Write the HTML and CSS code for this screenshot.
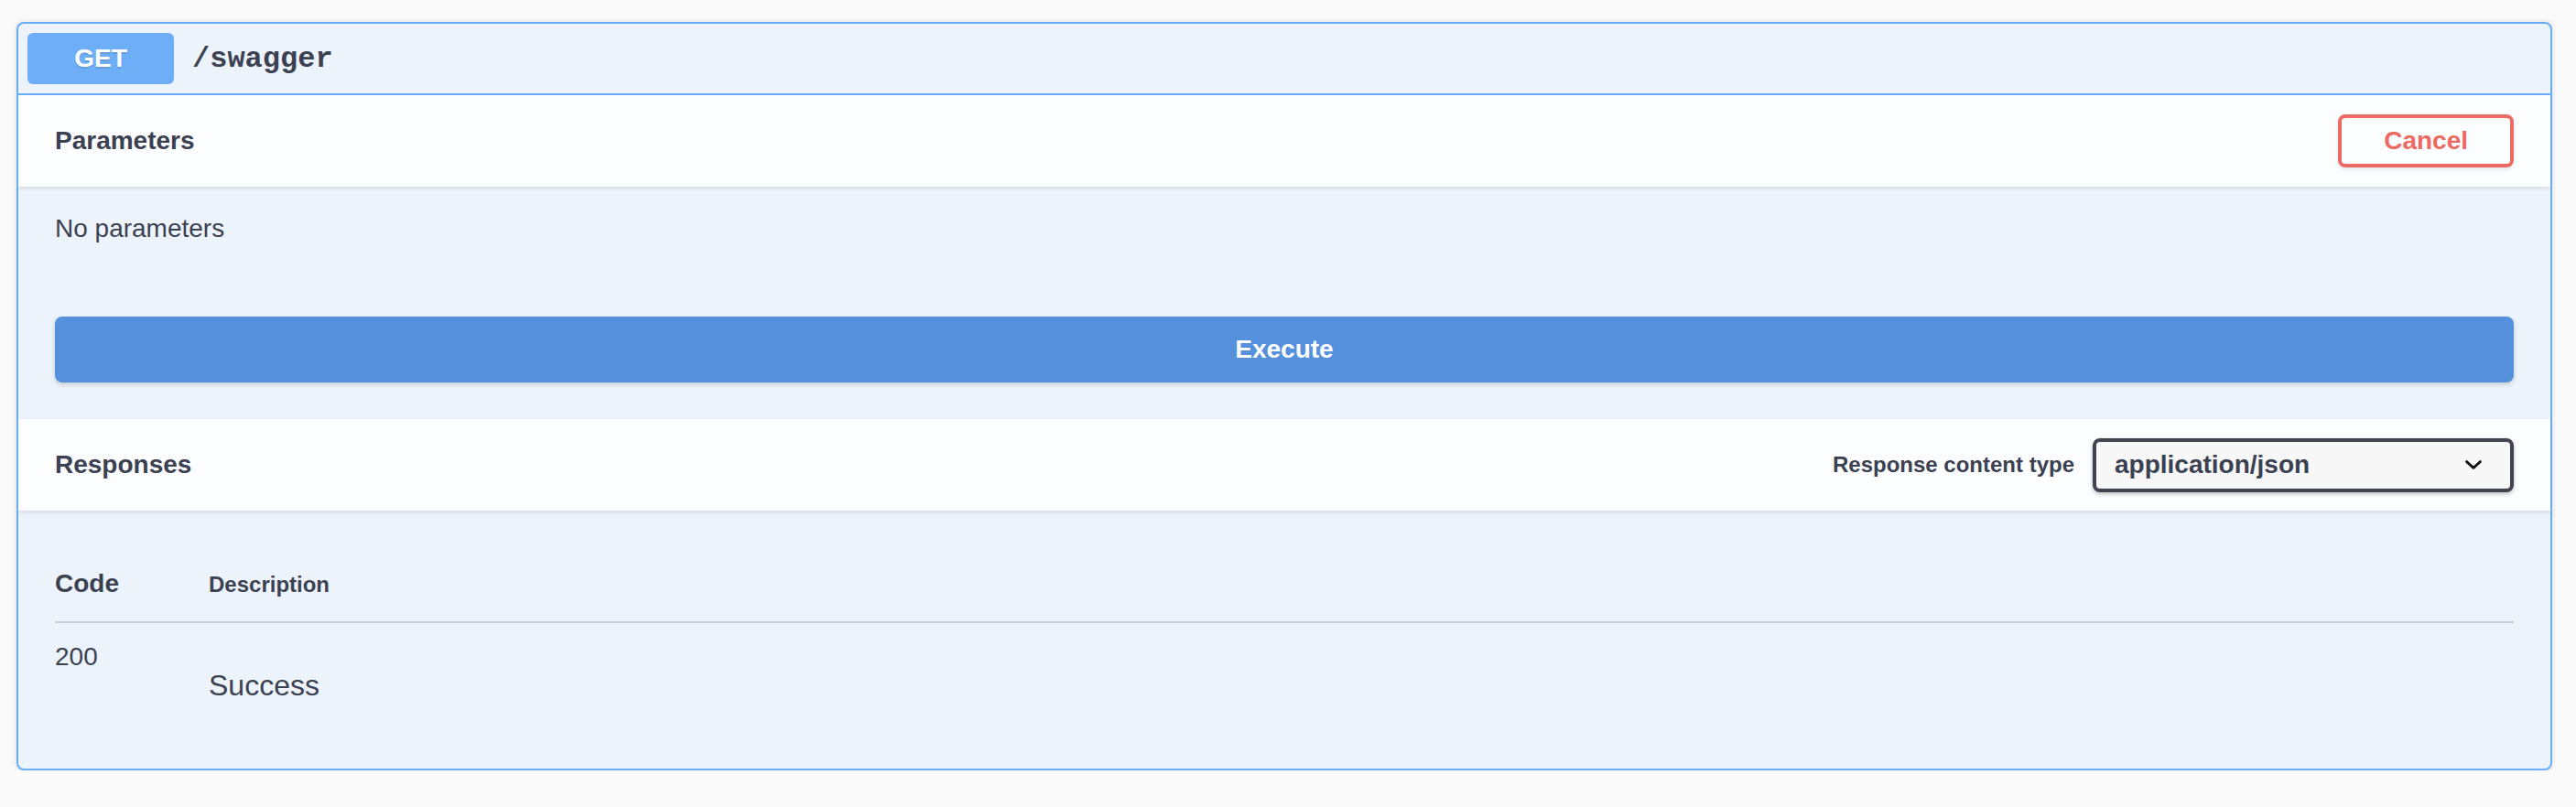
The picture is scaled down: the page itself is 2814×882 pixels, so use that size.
FILE: index.html
```html
<!DOCTYPE html>
<html lang="en">
<head>
<meta charset="utf-8">
<title>GET /swagger</title>
<link rel="stylesheet" href="styles.css">
</head>
<body>
<div class="opblock">
  <div class="summary">
    <span class="method">GET</span>
    <span class="path">/swagger</span>
  </div>
  <div class="section-header">
    <h4 class="section-title">Parameters</h4>
    <button class="btn-cancel" type="button">Cancel</button>
  </div>
  <div class="params-body">
    <p class="no-params">No parameters</p>
  </div>
  <div class="execute-wrapper">
    <button class="btn-execute" type="button">Execute</button>
  </div>
  <div class="section-header">
    <h4 class="section-title">Responses</h4>
    <div class="content-type">
      <span class="content-type-label">Response content type</span>
      <div class="select">
        <span class="select-value">application/json</span>
        <svg class="chevron" width="18" height="10" viewBox="0 0 18 10" aria-hidden="true"><path d="M1.6 1.6 L9 8.4 L16.4 1.6" fill="none" stroke="#111" stroke-width="2.8" stroke-linecap="round" stroke-linejoin="round"/></svg>
      </div>
    </div>
  </div>
  <div class="responses-inner">
    <table class="responses-table">
      <thead>
        <tr>
          <td class="col-status head-code">Code</td>
          <td class="head-desc">Description</td>
        </tr>
      </thead>
      <tbody>
        <tr>
          <td class="col-status status-code">200</td>
          <td class="desc-cell"><p class="desc-text">Success</p></td>
        </tr>
      </tbody>
    </table>
  </div>
</div>
</body>
</html>
```

FILE: styles.css
```css
html, body {
  margin: 0;
  background: #fafafa;
}
body {
  padding: 24px 26px 0 18px;
  font-family: "Liberation Sans", Arial, sans-serif;
  color: #3b4151;
}
.opblock {
  border: 2px solid #6aadf7;
  border-radius: 8px;
  background: #ecf3fb;
  box-shadow: 0 0 6px rgba(0, 0, 0, 0.12);
  overflow: hidden;
}
.summary {
  display: flex;
  align-items: center;
  padding: 10px;
  border-bottom: 2px solid #6aadf7;
}
.method {
  width: 160px;
  padding: 12px 0;
  line-height: 32px;
  font-size: 28px;
  font-weight: 700;
  text-align: center;
  color: #fff;
  background: #6eaef7;
  border-radius: 6px;
  text-shadow: 0 2px 0 rgba(0, 0, 0, 0.1);
}
.path {
  padding-left: 20px;
  font-family: "Liberation Mono", "Courier New", monospace;
  font-weight: 700;
  font-size: 32px;
  color: #3b4151;
}
.section-header {
  display: flex;
  align-items: center;
  justify-content: space-between;
  height: 100px;
  box-sizing: border-box;
  padding: 0 40px;
  background: #fcfdfe;
  box-shadow: 0 2px 4px rgba(0, 0, 0, 0.1);
  position: relative;
}
.section-title {
  margin: 0;
  font-size: 28px;
  line-height: 32px;
  font-weight: 700;
  color: #3b4151;
}
.btn-cancel {
  padding: 10px 46px;
  border: 4px solid #ec6a64;
  border-radius: 8px;
  background: transparent;
  color: #ec6a64;
  font-family: "Liberation Sans", Arial, sans-serif;
  font-size: 28px;
  font-weight: 700;
  line-height: 30px;
  box-shadow: 0 2px 4px rgba(0, 0, 0, 0.1);
}
.params-body {
  padding: 30px 40px 0;
}
.no-params {
  margin: 0;
  font-size: 28px;
  line-height: 32px;
}
.execute-wrapper {
  padding: 80px 40px 40px;
}
.btn-execute {
  display: block;
  width: 100%;
  height: 72px;
  border: none;
  border-radius: 8px;
  background: #5590dc;
  color: #fff;
  font-family: "Liberation Sans", Arial, sans-serif;
  font-size: 28px;
  font-weight: 700;
  box-shadow: 0 2px 5px rgba(0, 0, 0, 0.18);
}
.content-type {
  display: flex;
  align-items: center;
  gap: 20px;
}
.content-type-label {
  font-size: 24px;
  font-weight: 700;
}
.select {
  display: flex;
  align-items: center;
  width: 460px;
  height: 59px;
  box-sizing: border-box;
  padding: 0 31px 0 20px;
  border: 4px solid #41444e;
  border-radius: 8px;
  background: #f7f7f7;
  box-shadow: 0 2px 4px rgba(0, 0, 0, 0.25);
}
.select-value {
  font-size: 28px;
  font-weight: 700;
  color: #3b4151;
}
.chevron {
  margin-left: auto;
  display: block;
}
.responses-inner {
  padding: 40px;
}
.responses-table {
  width: 100%;
  border-collapse: collapse;
}
.responses-table td {
  padding: 0;
}
.col-status {
  width: 168px;
}
.responses-table thead td {
  padding: 24px 0;
  line-height: 32px;
  font-weight: 700;
  vertical-align: baseline;
  border-bottom: 2px solid #cacfd9;
}
.head-code {
  font-size: 28px;
}
.head-desc {
  font-size: 24px;
}
.responses-table tbody td {
  padding-top: 20px;
  vertical-align: top;
}
.status-code {
  font-size: 28px;
  line-height: 34px;
}
.desc-text {
  margin: 30px 0 32px;
  font-size: 32px;
  line-height: 37px;
}
```
